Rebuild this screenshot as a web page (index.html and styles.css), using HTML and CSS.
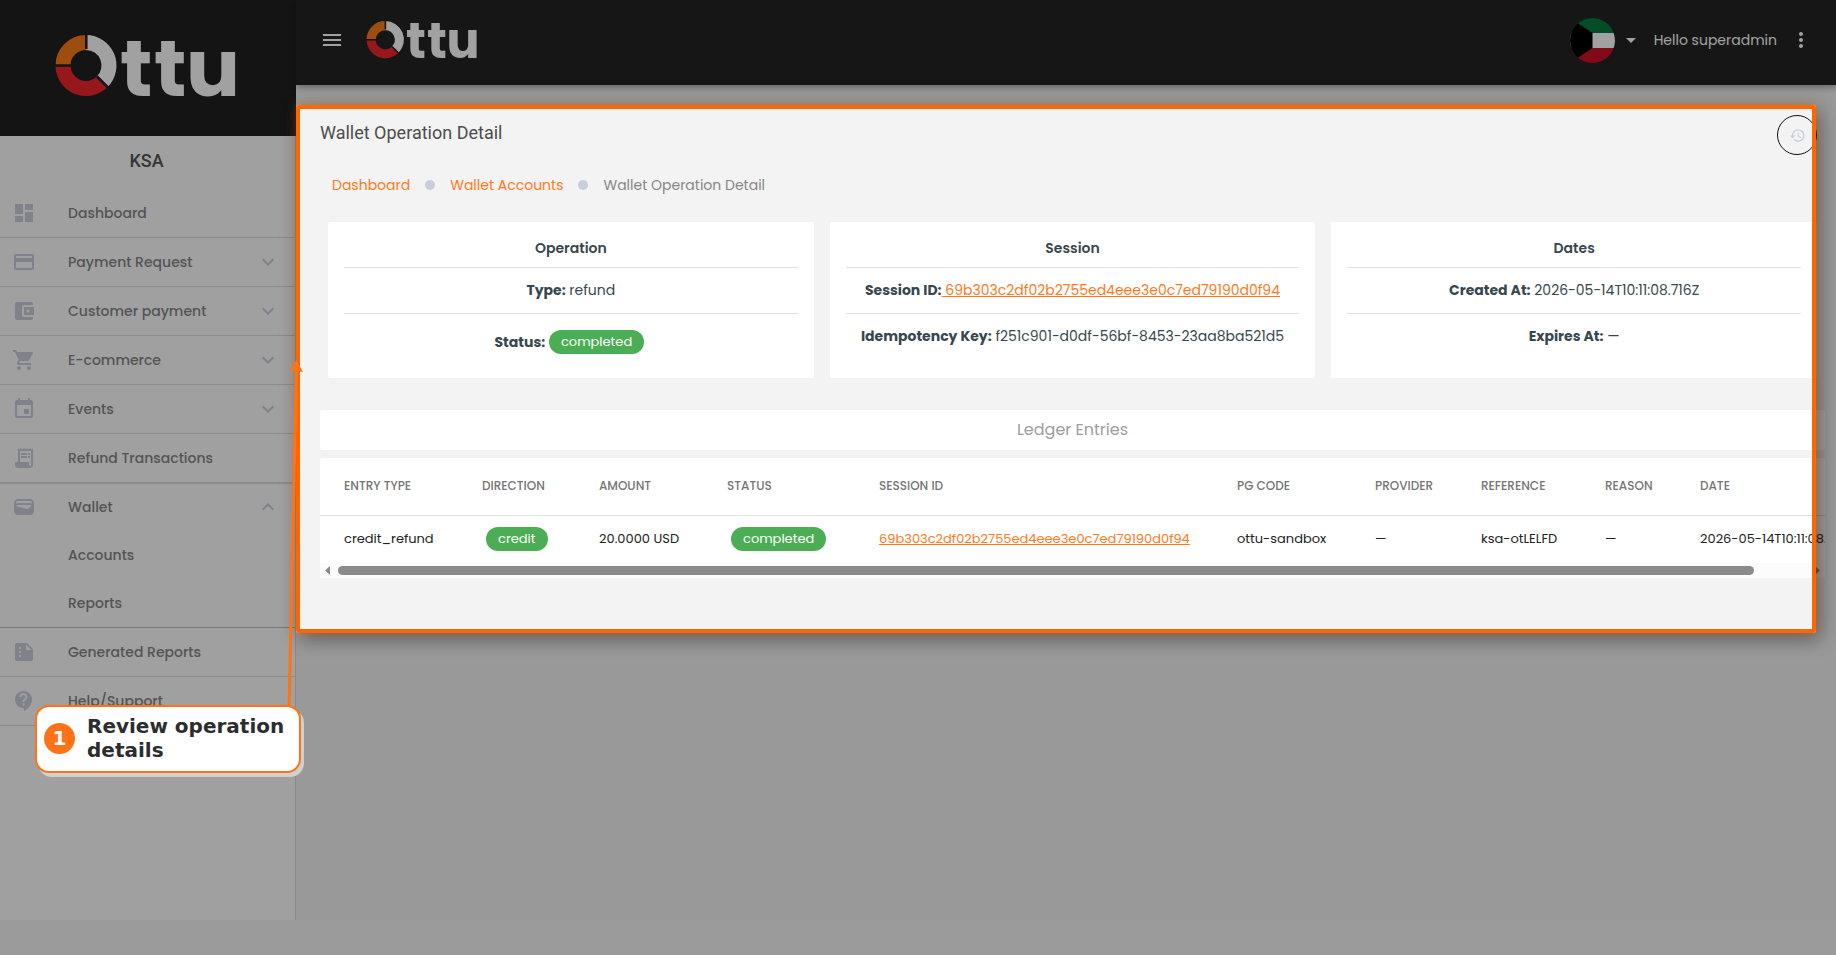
FILE: index.html
```html
<!DOCTYPE html>
<html lang="en">
<head>
<meta charset="utf-8">
<meta name="viewport" content="width=device-width, initial-scale=1">
<title>Wallet Operation Detail</title>
<link rel="stylesheet" href="styles.css">
</head>
<body>
<svg class="sprite" aria-hidden="true">
  <symbol id="logo" viewBox="0 0 182 62" overflow="visible">
    <path d="M8 30.500A23 23 0 0 1 31 7.500" fill="none" stroke="#fa7b1b" stroke-width="15"/>
    <path d="M31 7.500A23 23 0 0 1 47.260 46.760" fill="none" stroke="#ffffff" stroke-width="15"/>
    <path d="M47.260 46.760A23 23 0 0 1 8 30.500" fill="none" stroke="#ee272e" stroke-width="15"/>
    <path class="logo-gap" d="M31.300 14V-1M16 30.500H-1M42 41.500L54 53.500" stroke-width="2.500"/>
    <text class="logo-text" x="65 99 131" y="61">ttu</text>
  </symbol>
  <symbol id="down" viewBox="0 0 24 24"><path d="M16.590 8.590L12 13.170 7.410 8.590 6 10l6 6 6-6z"/></symbol>
  <symbol id="up" viewBox="0 0 24 24"><path d="M12 8l-6 6 1.410 1.410L12 10.830l4.590 4.580L18 14z"/></symbol>
</svg>

<div class="app">
  <aside class="sidebar">
    <a class="brand" href="#" aria-label="Ottu home"><svg width="182" height="62"><use href="#logo"/></svg></a>
    <h2 class="merchant">KSA</h2>
    <nav class="nav">
      <a class="item" href="#"><svg class="icon" viewBox="0 0 24 24"><path d="M3 13h8V3H3v10zm0 8h8v-6H3v6zm10 0h8V11h-8v10zm0-18v6h8V3h-8z"/></svg><span class="label">Dashboard</span></a>
      <button class="item" type="button"><svg class="icon" viewBox="0 0 24 24"><path d="M20 4H4c-1.110 0-1.990.890-1.990 2L2 18c0 1.110.890 2 2 2h16c1.110 0 2-.890 2-2V6c0-1.110-.890-2-2-2zm0 14H4v-6h16v6zm0-10H4V6h16v2z"/></svg><span class="label">Payment Request</span><svg class="icon"><use href="#down"/></svg></button>
      <button class="item" type="button"><svg class="icon" viewBox="0 0 24 24"><path d="M21 18v1c0 1.100-.900 2-2 2H5c-1.110 0-2-.900-2-2V5c0-1.100.890-2 2-2h14c1.100 0 2 .900 2 2v1h-9c-1.110 0-2 .900-2 2v8c0 1.100.890 2 2 2h9zm-9-2h10V8H12v8zm4-2.500c-.830 0-1.500-.670-1.500-1.500s.670-1.500 1.500-1.500 1.500.670 1.500 1.500-.670 1.500-1.500 1.500z"/></svg><span class="label">Customer payment</span><svg class="icon"><use href="#down"/></svg></button>
      <button class="item" type="button"><svg class="icon" viewBox="0 0 24 24"><path d="M7 18c-1.100 0-1.990.900-1.990 2S5.900 22 7 22s2-.900 2-2-.900-2-2-2zM1 2v2h2l3.600 7.590-1.350 2.450c-.160.280-.250.610-.250.960 0 1.100.900 2 2 2h12v-2H7.420c-.140 0-.250-.110-.250-.250l.030-.120.900-1.630h7.450c.750 0 1.410-.410 1.750-1.030l3.580-6.490c.080-.140.120-.310.120-.480 0-.550-.450-1-1-1H5.210l-.940-2H1zm16 16c-1.100 0-1.990.900-1.990 2s.890 2 1.990 2 2-.900 2-2-.900-2-2-2z"/></svg><span class="label">E-commerce</span><svg class="icon"><use href="#down"/></svg></button>
      <button class="item" type="button"><svg class="icon" viewBox="0 0 24 24"><path d="M17 12h-5v5h5v-5zM16 1v2H8V1H6v2H5c-1.110 0-1.990.900-1.990 2L3 19c0 1.100.890 2 2 2h14c1.100 0 2-.900 2-2V5c0-1.100-.900-2-2-2h-1V1h-2zm3 18H5V8h14v11z"/></svg><span class="label">Events</span><svg class="icon"><use href="#down"/></svg></button>
      <a class="item" href="#"><svg class="icon" viewBox="0 0 24 24"><path d="M19.500 3.500L18 2l-1.500 1.500L15 2l-1.500 1.500L12 2l-1.500 1.500L9 2 7.500 3.500 6 2v14H3v3c0 1.660 1.340 3 3 3h12c1.660 0 3-1.340 3-3V2l-1.500 1.500zM19 19c0 .550-.450 1-1 1s-1-.450-1-1v-3H8V5h11v14zM9 7h6v2H9zM16 7h2v2h-2zM9 10h6v2H9zM16 10h2v2h-2z"/></svg><span class="label">Refund Transactions</span></a>
      <div class="group">
        <button class="item" type="button" aria-expanded="true"><svg class="icon" viewBox="0 0 24 24"><path d="M18 4H6C3.790 4 2 5.790 2 8v8c0 2.210 1.790 4 4 4h12c2.210 0 4-1.790 4-4V8c0-2.210-1.790-4-4-4zm-1.860 9.770c-.240.200-.570.280-.880.200L4.150 11.250C4.450 10.520 5.160 10 6 10h12c.670 0 1.260.340 1.630.840l-3.490 2.930zM6 6h12c1.100 0 2 .900 2 2v.550c-.590-.340-1.270-.550-2-.550H6c-.730 0-1.410.210-2 .550V8c0-1.100.900-2 2-2z"/></svg><span class="label">Wallet</span><svg class="icon"><use href="#up"/></svg></button>
        <a class="item sub" href="#"><span class="label">Accounts</span></a>
        <a class="item sub" href="#"><span class="label">Reports</span></a>
      </div>
      <a class="item" href="#"><svg class="icon" viewBox="0 0 24 24"><path d="M15 3H5c-1.100 0-1.990.900-1.990 2L3 19c0 1.100.890 2 1.990 2H19c1.100 0 2-.900 2-2V9l-6-6zM8 17c-.550 0-1-.450-1-1s.450-1 1-1 1 .450 1 1-.450 1-1 1zm0-4c-.550 0-1-.450-1-1s.450-1 1-1 1 .450 1 1-.450 1-1 1zm0-4c-.550 0-1-.450-1-1s.450-1 1-1 1 .450 1 1-.450 1-1 1zm6 1V4.500l5.500 5.500H14z"/></svg><span class="label">Generated Reports</span></a>
      <a class="item" href="#"><svg class="icon" viewBox="0 0 24 24"><path d="M11.500 2C6.810 2 3 5.810 3 10.500S6.810 19 11.500 19h.500v3c4.860-2.340 8-7 8-11.500C20 5.810 16.190 2 11.500 2zm1 14.500h-2v-2h2v2zm0-3.500h-2c0-3.250 3-3 3-5 0-1.100-.900-2-2-2s-2 .900-2 2h-2c0-2.210 1.790-4 4-4s4 1.790 4 4c0 2.500-3 2.750-3 5z"/></svg><span class="label">Help/Support</span></a>
    </nav>
  </aside>

  <div class="page">
    <header class="topbar">
      <button class="plain" type="button" aria-label="Toggle menu"><svg width="24" height="24" viewBox="0 0 24 24"><path d="M3 18h18v-2H3v2zm0-5h18v-2H3v2zm0-7v2h18V6H3z"/></svg></button>
      <a class="top-logo" href="#" aria-label="Ottu"><svg width="112" height="38"><use href="#logo"/></svg></a>
      <button class="plain flag" type="button" aria-label="Country: Kuwait">
        <svg width="45" height="45" viewBox="0 0 45 45"><clipPath id="round"><circle cx="22.500" cy="22.500" r="22.500"/></clipPath><g clip-path="url(#round)"><path fill="#007a3d" d="M0 0h45v15H0z"/><path fill="#fff" d="M0 15h45v15H0z"/><path fill="#ce1126" d="M0 30h45v15H0z"/><path fill="#000" d="M0 0L22.500 15v15L0 45z"/></g></svg>
        <svg width="10" height="5" viewBox="0 0 10 5"><path d="M0 0h10L5 5z"/></svg>
      </button>
      <span class="hello">Hello superadmin</span>
      <button class="plain" type="button" aria-label="More options"><svg width="24" height="24" viewBox="0 0 24 24"><path d="M12 8c1.100 0 2-.900 2-2s-.900-2-2-2-2 .900-2 2 .900 2 2 2zm0 2c-1.100 0-2 .900-2 2s.900 2 2 2 2-.900 2-2-.900-2-2-2zm0 6c-1.100 0-2 .900-2 2s.900 2 2 2 2-.900 2-2-.900-2-2-2z"/></svg></button>
    </header>

    <main class="detail">
      <div class="title-row">
        <h1 class="title">Wallet Operation Detail</h1>
        <button class="history" type="button" aria-label="History"><svg width="17" height="17" viewBox="0 0 24 24"><path d="M13 3c-4.970 0-9 4.030-9 9H1l3.890 3.890.070.140L9 12H6c0-3.870 3.130-7 7-7s7 3.130 7 7-3.130 7-7 7c-1.930 0-3.680-.790-4.940-2.060l-1.420 1.420C8.270 19.990 10.510 21 13 21c4.970 0 9-4.030 9-9s-4.030-9-9-9zm-1 5v5l4.280 2.540.720-1.210-3.500-2.080V8H12z"/></svg></button>
      </div>
      <nav class="crumbs" aria-label="Breadcrumb">
        <a href="#">Dashboard</a><i class="dot"></i><a href="#">Wallet Accounts</a><i class="dot"></i><span>Wallet Operation Detail</span>
      </nav>
      <div class="cards">
        <section class="card">
          <h3>Operation</h3>
          <p><b>Type:</b> refund</p>
          <p class="with-pill"><b>Status:</b> <span class="pill">completed</span></p>
        </section>
        <section class="card">
          <h3>Session</h3>
          <p><b>Session ID:</b><a class="link" href="#">&nbsp;69b303c2df02b2755ed4eee3e0c7ed79190d0f94</a></p>
          <p><b>Idempotency Key:</b> f251c901-d0df-56bf-8453-23aa8ba521d5</p>
        </section>
        <section class="card">
          <h3>Dates</h3>
          <p><b>Created At:</b> 2026-05-14T10:11:08.716Z</p>
          <p><b>Expires At:</b> —</p>
        </section>
      </div>
      <h2 class="ledger-title">Ledger Entries</h2>
      <div class="ledger">
        <table>
          <colgroup><col class="c-type"><col class="c-dir"><col class="c-amt"><col class="c-stat"><col class="c-sess"><col class="c-pg"><col class="c-prov"><col class="c-ref"><col class="c-reas"><col class="c-date"></colgroup>
          <thead><tr><th>Entry type</th><th>Direction</th><th>Amount</th><th>Status</th><th>Session ID</th><th>PG Code</th><th>Provider</th><th>Reference</th><th>Reason</th><th>Date</th></tr></thead>
          <tbody><tr><td>credit_refund</td><td><span class="pill cell-pill">credit</span></td><td>20.0000 USD</td><td><span class="pill cell-pill">completed</span></td><td><a class="link" href="#">69b303c2df02b2755ed4eee3e0c7ed79190d0f94</a></td><td>ottu-sandbox</td><td>—</td><td>ksa-otLELFD</td><td>—</td><td>2026-05-14T10:11:08.716Z</td></tr></tbody>
        </table>
      </div>
      <div class="scrollbar" aria-hidden="true">
        <svg width="5" height="9" viewBox="0 0 5 9"><path d="M5 0v9L0 4.500z"/></svg>
        <div class="track"><div class="thumb"></div></div>
        <svg width="5" height="9" viewBox="0 0 5 9"><path d="M0 0v9l5-4.500z"/></svg>
      </div>
      <div class="spotlight"></div>
    </main>
  </div>
</div>

<svg class="arrow" width="20" height="350" viewBox="0 0 20 350" aria-hidden="true"><path d="M5 350L12.500 8" fill="none" stroke="#ff7316" stroke-width="3"/><path d="M12.500 0L19 12L6 10z" fill="#ff7316"/></svg>
<div class="callout"><span class="step">1</span><strong class="callout-text">Review operation details</strong></div>
</body>
</html>
```
FILE: styles.css
```css
* { box-sizing: border-box; }

body {
  margin: 0;
  position: relative;
  overflow-x: hidden;
  background: #f5f5f5;
  color: #37474f;
  font-family: Poppins, Inter, sans-serif;
  font-size: 14px;
}

h1, h2, h3, p { margin: 0; }
svg { display: block; flex: none; overflow: visible; }
a { color: #ff7a1a; text-decoration: none; }
button { font: inherit; color: inherit; border: 0; background: none; padding: 0; cursor: pointer; }

.sprite { position: absolute; width: 0; height: 0; overflow: hidden; }
.logo-text { font: 700 80px Poppins, Inter, sans-serif; fill: #fff; }
.logo-gap { stroke: #202020; }

.app {
  display: grid;
  grid-template-columns: 296px minmax(0, 1fr);
  min-height: calc(100vh - 35px);
  margin-bottom: 35px;
}

/* Sidebar */
.sidebar { background: #fdfdfd; border-right: 1px solid #dddddd; }
.brand {
  display: flex;
  align-items: center;
  height: 136px;
  padding: 0 0 4px 55px;
  margin-right: -1px;
  background: #202020;
}
.merchant {
  height: 53px;
  padding-right: 2px;
  font: 500 18px/50px Roboto, sans-serif;
  color: #555;
  text-align: center;
}
.item {
  display: flex;
  align-items: center;
  width: 100%;
  height: 49px;
  padding: 0 15px 0 12px;
  border-bottom: 1px solid #dcdcdc;
  color: #868686;
  font-size: 14px;
  font-weight: 500;
  text-align: left;
}
.icon { width: 24px; height: 24px; fill: #c9cddc; }
.label { flex: 1; padding-left: 32px; }
.group { border-bottom: 1px solid #c0c0c0; box-shadow: inset 0 1px #dcdcdc; }
.group .item { height: 48px; border: 0; }
.group .sub { padding-left: 36px; }

/* Top bar */
.page { background: #f3f3f3; }
.topbar {
  display: flex;
  align-items: center;
  height: 85px;
  padding: 0 23px 5px 24px;
  background: #232323;
  color: #fff;
  fill: #fff;
  box-shadow: 0 3px 6px rgba(0, 0, 0, .3);
}
.top-logo { margin: 0 auto 0 22px; }
.flag { display: flex; align-items: center; gap: 11px; }
.hello { margin: 0 12px 0 18px; }

/* Operation detail */
.detail {
  position: relative;
  margin-top: 20px;
  padding: 10px 11px 55px 24px;
}
.title-row { display: flex; justify-content: space-between; height: 40px; padding-right: 8px; }
.title { font: 400 18px/36px Roboto, sans-serif; color: #4d4d4d; }
.history {
  display: flex;
  align-items: center;
  justify-content: center;
  width: 40px;
  height: 40px;
  border: 1px solid #111;
  border-radius: 50%;
  fill: #c9cddc;
}
.crumbs {
  display: flex;
  align-items: center;
  gap: 15px;
  padding: 18px 12px 25px;
  line-height: 24px;
  color: #868686;
}
.dot { width: 10px; height: 10px; border-radius: 50%; background: #c9cddc; }

.cards { display: grid; grid-template-columns: repeat(3, minmax(0, 1fr)); gap: 16px; padding: 0 8px; }
.card { padding: 16px 16px 19px; border-radius: 2px; background: #fff; text-align: center; line-height: 20px; }
.card h3 { padding-bottom: 9px; font-size: 14px; font-weight: 600; }
.card p { padding: 12px 0 13px; border-top: 1px solid #e0e0e0; }
.card .with-pill { padding: 16px 3px 5px 0; line-height: 24px; }
.card b { font-weight: 700; }
.pill {
  display: inline-block;
  padding: 0 12px;
  border-radius: 12px;
  background: #4cae54;
  color: #fff;
  font-size: 13px;
  line-height: 24px;
  vertical-align: top;
}
.link { text-decoration: underline; }

.ledger-title {
  margin: 32px 0 8px;
  border-radius: 2px;
  background: #fff;
  color: #9e9e9e;
  font-size: 16px;
  font-weight: 400;
  line-height: 40px;
  text-align: center;
}
.ledger { overflow: hidden; border-radius: 2px 2px 0 0; background: #fff; }
table { width: 1568px; table-layout: fixed; border-collapse: collapse; }
th, td { padding: 0 0 0 24px; text-align: left; white-space: nowrap; }
th { height: 57px; border-bottom: 1px solid #e0e0e0; color: #757575; font-size: 12px; font-weight: 500; text-transform: uppercase; }
td { height: 48px; color: #212121; font-size: 13px; }
.cell-pill { margin-left: 4px; }
.c-type { width: 138px; }
.c-dir { width: 117px; }
.c-amt { width: 128px; }
.c-stat { width: 152px; }
.c-sess { width: 358px; }
.c-pg { width: 138px; }
.c-prov { width: 106px; }
.c-ref { width: 124px; }
.c-reas { width: 95px; }

.scrollbar { display: flex; align-items: center; gap: 8px; height: 15px; padding: 0 5px; background: #fcfcfc; fill: #8b8b8b; }
.track { flex: 1; }
.thumb { width: 96.4%; height: 9px; border-radius: 5px; background: #8b8b8b; }

/* Tour overlay */
.spotlight {
  position: absolute;
  inset: 0 20px 0 0;
  border: 4px solid #ff6600;
  border-radius: 3px;
  box-shadow: 0 0 12px rgba(255, 102, 0, .3), 4px 6px 20px rgba(0, 0, 0, .4), 0 0 0 2000px rgba(0, 0, 0, .37);
  pointer-events: none;
}
.arrow { position: absolute; left: 284px; top: 360px; }
.callout {
  position: absolute;
  left: 35px;
  top: 705px;
  display: flex;
  align-items: center;
  gap: 12px;
  width: 266px;
  padding: 7px 7px 9px;
  border: 2px solid #ff7316;
  border-radius: 14px;
  background: #fff;
  box-shadow: 3px 4px 0 #d0d0d0;
  color: #2d2d2d;
  font: bold 20px/24px "DejaVu Sans", sans-serif;
}
.step {
  flex: none;
  width: 31px;
  height: 31px;
  border-radius: 50%;
  background: #ff7316;
  color: #fff;
  line-height: 31px;
  text-align: center;
}
```
